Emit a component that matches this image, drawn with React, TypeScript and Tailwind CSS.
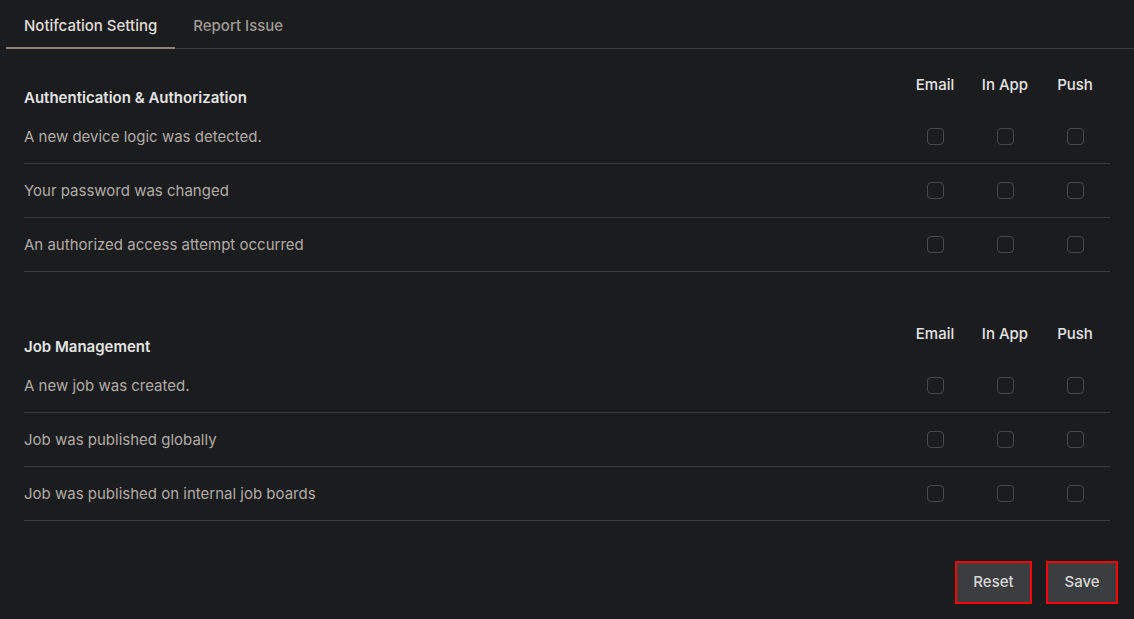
import React from "react";

const sections = [
  {
    title: "Authentication & Authorization",
    rows: [
      "A new device logic was detected.",
      "Your password was changed",
      "An authorized access attempt occurred",
    ],
  },
  {
    title: "Job Management",
    rows: [
      "A new job was created.",
      "Job was published globally",
      "Job was published on internal job boards",
    ],
  },
];

const channels = ["Email", "In App", "Push"];

function Check() {
  const [on, setOn] = React.useState(false);
  return (
    <button
      onClick={() => setOn(!on)}
      className={`h-[17px] w-[17px] rounded-[4px] border ${on ? "border-[#8a8276] bg-[#8a8276]" : "border-[#48494b] bg-transparent"}`}
    />
  );
}

function Section({ title, rows }: { title: string; rows: string[] }) {
  return (
    <div>
      <div className="flex h-[35px] justify-between">
        <h3 className="self-end mb-[2px] text-[15px] leading-5 font-semibold text-[#e4e4e4]">{title}</h3>
        <div className="flex self-start">
          {channels.map((c) => (
            <div key={c} className="w-[70px] text-center text-[15px] leading-5 font-medium text-[#e4e4e4]">
              {c}
            </div>
          ))}
        </div>
      </div>
      {rows.map((r) => (
        <div key={r} className="flex h-[54px] items-center justify-between border-b border-[#3a3b3d]">
          <span className="pt-[2px] text-[15px] text-[#b0aca5]">{r}</span>
          <div className="flex">
            {channels.map((c) => (
              <div key={c} className="flex w-[70px] justify-center">
                <Check />
              </div>
            ))}
          </div>
        </div>
      ))}
    </div>
  );
}

export default function App() {
  const [tab, setTab] = React.useState(0);
  return (
    <div className="min-h-[619px] w-full bg-[#1b1c1e] font-['Inter',sans-serif]">
      <div className="ml-[6px] flex h-[49px] border-b border-[#3a3b3d]">
        {["Notifcation Setting", "Report Issue"].map((t, i) => (
          <button
            key={t}
            onClick={() => setTab(i)}
            className={`-mb-px px-[18px] pt-[6px] text-[15px] font-medium ${tab === i ? "border-b-2 border-[#8a8276] text-[#e0ddd8]" : "border-b-2 border-transparent text-[#a09b94]"}`}
          >
            {t}
          </button>
        ))}
      </div>
      <div className="flex flex-col gap-[52px] px-[24px] pt-[26px]">
        {sections.map((s) => (
          <Section key={s.title} title={s.title} rows={s.rows} />
        ))}
      </div>
      <div className="mt-[40px] flex justify-end gap-[14px] pr-[16px]">
        <button className="h-[43px] w-[77px] border-2 border-[#ff0000] bg-[#3b3d3f] text-[15px] font-medium text-[#d8d8d8]">
          Reset
        </button>
        <button className="h-[43px] w-[72px] border-2 border-[#ff0000] bg-[#3b3d3f] text-[15px] font-medium text-[#d8d8d8]">
          Save
        </button>
      </div>
    </div>
  );
}
